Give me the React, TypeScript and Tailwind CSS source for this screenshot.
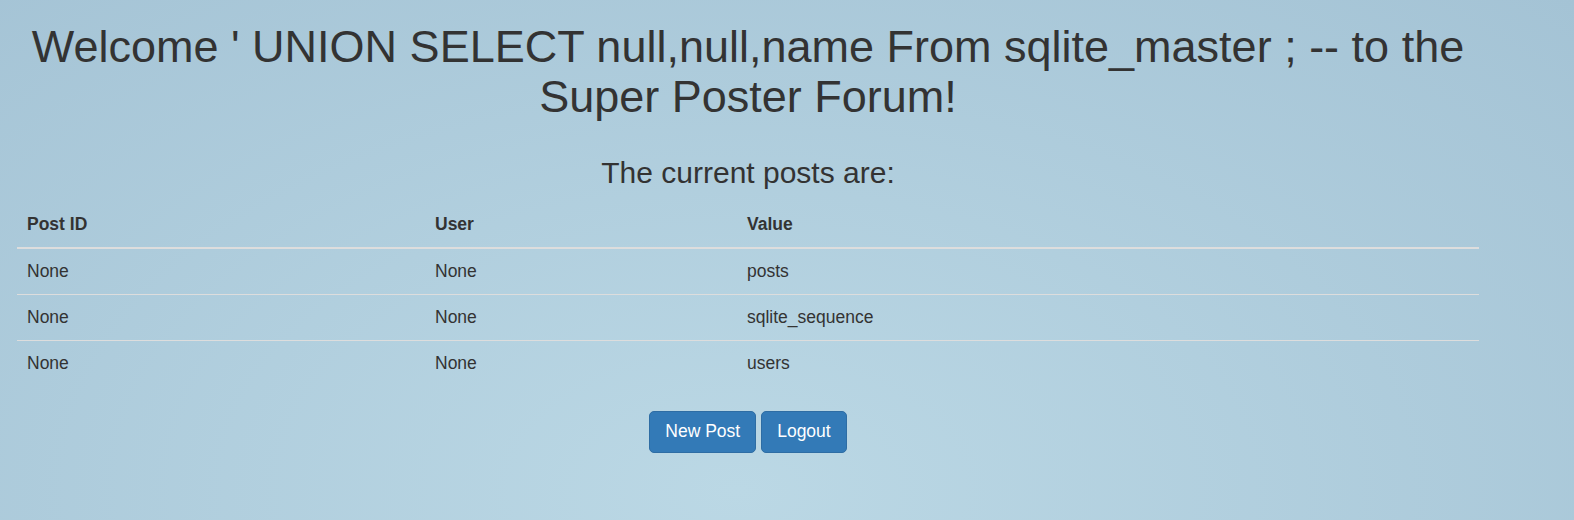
const posts = [
  { id: "None", user: "None", value: "posts" },
  { id: "None", user: "None", value: "sqlite_sequence" },
  { id: "None", user: "None", value: "users" },
];

export default function App() {
  return (
    <div
      className="h-[520px] w-full overflow-hidden bg-[radial-gradient(ellipse_at_738px_490px,#bbd8e5_0%,#a4c3d5_100%)] text-[#333] font-['Liberation_Sans',Arial,sans-serif]"
    >
      <div className="ml-[17px] w-[1462px]">
        <h1 className="mt-[22px] mb-0 text-center text-[45px] leading-[49.5px] font-normal">
          Welcome ' UNION SELECT null,null,name From sqlite_master ; -- to the Super Poster Forum!
        </h1>

        <h3 className="mt-[35px] mb-[12.5px] text-center text-[30px] leading-[33px] font-normal">
          The current posts are:
        </h3>

        <table className="w-full border-collapse text-[17.5px] leading-[25px] text-left">
          <thead>
            <tr className="border-b-[2.5px] border-[#ddd]">
              <th className="w-[408px] p-[10px] font-bold">Post ID</th>
              <th className="w-[312px] p-[10px] font-bold">User</th>
              <th className="p-[10px] font-bold">Value</th>
            </tr>
          </thead>
          <tbody>
            {posts.map((post, index) => (
              <tr key={index} className={index > 0 ? "border-t-[1.25px] border-[#ddd]" : ""}>
                <td className="p-[10px]">{post.id}</td>
                <td className="p-[10px]">{post.user}</td>
                <td className="p-[10px]">{post.value}</td>
              </tr>
            ))}
          </tbody>
        </table>

        <div className="mt-[25px] flex justify-center gap-[5px]">
          <button className="h-[42.5px] rounded-[5px] border-[1.25px] border-[#2e6da4] bg-[#337ab7] px-[15px] text-[17.5px] leading-[25px] text-white">
            New Post
          </button>
          <button className="h-[42.5px] rounded-[5px] border-[1.25px] border-[#2e6da4] bg-[#337ab7] px-[15px] text-[17.5px] leading-[25px] text-white">
            Logout
          </button>
        </div>
      </div>
    </div>
  );
}
